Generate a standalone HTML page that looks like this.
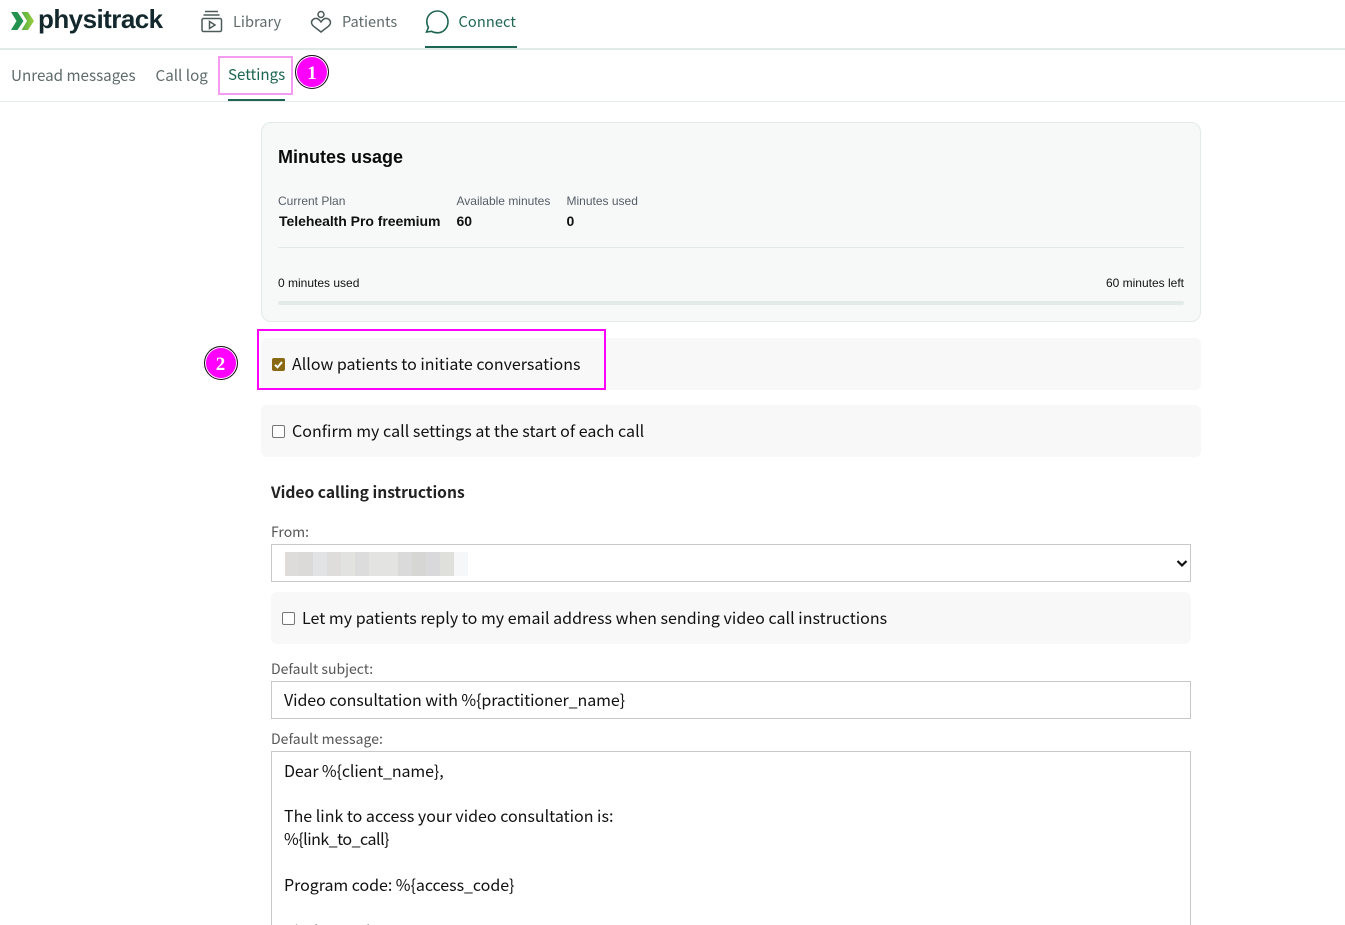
<!DOCTYPE html>
<html style="overflow:hidden;height:925px"><head><meta charset="utf-8"><title>Physitrack Connect Settings</title>
<style>
html,body{margin:0;padding:0;background:#fff}
body{width:1345px;height:925px;overflow:hidden;font-family:"Noto Sans CJK JP","Liberation Sans",sans-serif;color:#111}
#w{position:relative;width:1345px;height:925px;overflow:hidden}
.a{position:absolute;white-space:nowrap}
.t{position:absolute;white-space:nowrap;line-height:24px;font-size:16px}
.ar{font-family:"Liberation Sans",Arial,sans-serif}
.nav{color:#5f6a6a;font-size:14.6px}
.sub{color:#5f6a6a;font-size:15.2px}
.panel{position:absolute;background:#f8f8f8;border-radius:6px;left:261px;width:940px;height:52px}
.cb{position:absolute;width:11px;height:11px;border:1px solid #767676;border-radius:2px;background:#fff}
.pink{position:absolute;border:2px solid #f0f;box-sizing:border-box}
.num{position:absolute;width:32px;height:32px;border-radius:50%;background:#f0f;border:1px solid #111;box-shadow:inset 0 0 0 1px #fff;color:#fff;font:bold 19px/35px "Liberation Serif",serif;text-align:center}
.input{position:absolute;left:271px;width:918px;border:1px solid #c8c8c8;background:#fff}
.lbl{color:#555;font-size:14px}
</style></head><body><div id="w">

<svg class="a" style="left:10px;top:11px" width="25" height="20" viewBox="0 0 25 20"><defs><linearGradient id="g" x1="0" x2="1" y1="0" y2="0"><stop offset="0" stop-color="#55ad45"/><stop offset="1" stop-color="#9ad03f"/></linearGradient></defs><path d="M1 1h6.500l6 9-6 9H1l5.500-9z" fill="#23924e"/><path d="M11.500 1H18l6 9-6 9h-6.500l5.500-9z" fill="url(#g)"/></svg>
<div class="a ar" style="left:38px;top:3px;font-size:26px;line-height:32px;font-weight:bold;color:#13282c;letter-spacing:-.55px">physitrack</div>

<svg class="a" style="left:200px;top:10px" width="24" height="24" viewBox="0 0 24 24" fill="none" stroke="#4d5a5a" stroke-width="1.500"><path d="M5 1.500h13M3.500 5h16"/><rect x="2" y="8.500" width="19.500" height="13" rx="1.500"/><path d="M9.500 11.500v7l5.500-3.500z"/></svg>
<div class="t nav" style="left:233px;top:10px">Library</div>
<svg class="a" style="left:310px;top:10px" width="22" height="24" viewBox="0 0 22 24" fill="none" stroke="#4d5a5a" stroke-width="1.500"><circle cx="11" cy="4.500" r="3"/><path d="M7 8.500C4 8 1.500 10 1.500 12.500c0 1.500.8 2.500 2 3.700L11 22l7.500-5.800c1.200-1.200 2-2.200 2-3.700 0-2.500-2.500-4.500-5.500-4C13.500 9 12 10.500 11 12 10 10.500 8.500 9 7 8.500z"/></svg>
<div class="t nav" style="left:342px;top:10px">Patients</div>
<svg class="a" style="left:425px;top:10px" width="24" height="24" viewBox="0 0 24 24" fill="none" stroke="#1d6552" stroke-width="1.600"><path d="M12.500 1C6.500 1 1.800 5.600 1.800 11.500c0 2.300.6 4.300 1.600 6L1.500 22l5-.7c1.800 1 3.800 1.500 6 1.500 6 0 10.500-5 10.500-11S18.500 1 12.500 1z"/></svg>
<div class="t nav" style="left:458.500px;top:10px;color:#1d6552;letter-spacing:.1px">Connect</div>
<div class="a" style="left:425px;top:46px;width:92px;height:2px;background:#1d6552;z-index:2"></div>
<div class="a" style="left:0;top:48px;width:1345px;height:2px;background:#e2ebe8"></div>

<div class="t sub" style="left:11px;top:63px">Unread messages</div>
<div class="t sub" style="left:155.500px;top:63px">Call log</div>
<div class="t sub" style="left:228px;top:62px;color:#1d6552;font-size:15.1px">Settings</div>
<div class="a" style="left:228px;top:99px;width:57px;height:2px;background:#1d6552;z-index:2"></div>
<div class="a" style="left:0;top:101px;width:1345px;height:1px;background:#e6ecea"></div>
<div class="pink" style="left:218px;top:56px;width:75px;height:39px;border-color:#f59bf0"></div>
<div class="num" style="left:295px;top:55px">1</div>

<div class="a" style="left:261px;top:122px;width:938px;height:198px;background:#f7f9f9;border:1px solid #e2ebe8;border-radius:10px"></div>
<div class="a ar" style="left:278px;top:145px;font-size:18px;line-height:24px;font-weight:bold;color:#0b0b0b">Minutes usage</div>
<div class="a ar" style="left:278px;top:193px;font-size:12px;line-height:16px;color:#555d66">Current Plan</div>
<div class="a ar" style="left:456.500px;top:193px;font-size:12px;line-height:16px;color:#555d66">Available minutes</div>
<div class="a ar" style="left:566.500px;top:193px;font-size:12px;line-height:16px;color:#555d66">Minutes used</div>
<div class="a ar" style="left:279px;top:213px;font-size:14px;line-height:16px;font-weight:bold;letter-spacing:-.04px">Telehealth Pro freemium</div>
<div class="a ar" style="left:456.500px;top:213px;font-size:14px;line-height:16px;font-weight:bold">60</div>
<div class="a ar" style="left:566.500px;top:213px;font-size:14px;line-height:16px;font-weight:bold">0</div>
<div class="a" style="left:278px;top:247px;width:906px;height:1px;background:#e2ebe8"></div>
<div class="a ar" style="left:278px;top:275px;font-size:12px;line-height:16px">0 minutes used</div>
<div class="a ar" style="right:161px;top:275px;font-size:12px;line-height:16px">60 minutes left</div>
<div class="a" style="left:278px;top:301px;width:906px;height:4px;border-radius:2px;background:#e2ebe8"></div>

<div class="panel" style="top:338px"></div>
<div class="pink" style="left:257px;top:329px;width:349px;height:61px"></div>
<div class="num" style="left:203.500px;top:345.500px">2</div>
<div class="cb" style="left:272px;top:358px;background:#8a6914;border-color:#8a6914"></div>
<svg class="a" style="left:272px;top:358px" width="13" height="13" viewBox="0 0 13 13"><path d="M3 6.800l2.500 2.500L10 4" fill="none" stroke="#fff" stroke-width="2"/></svg>
<div class="t" style="left:292px;top:351px">Allow patients to initiate conversations</div>

<div class="panel" style="top:405px"></div>
<div class="cb" style="left:272px;top:425px"></div>
<div class="t" style="left:292px;top:418px;letter-spacing:.04px">Confirm my call settings at the start of each call</div>

<div class="t" style="left:271px;top:480px;font-weight:bold;font-size:15.600px;color:#222">Video calling instructions</div>

<div class="t lbl" style="left:271px;top:520px">From:</div>
<div class="input" style="top:544px;height:36px"></div>
<div class="a" style="left:285px;top:552px;width:183px;height:24px;background:linear-gradient(90deg,#dddcda 0 14px,#dbdad8 14px 28px,#e2e3e5 28px 42px,#dedddb 42px 56px,#e2e2e1 56px 70px,#dcdcdc 70px 84px,#e3e3e2 84px 113px,#dadada 113px 127px,#d6d6d4 127px 141px,#d9d9db 141px 155px,#dfdfdc 155px 169px,#f6f7f9 169px 183px)"></div>
<svg class="a" style="left:1176px;top:559px" width="12" height="9" viewBox="0 0 12 9"><path d="M1.500 2L6 6.500 10.500 2" fill="none" stroke="#111" stroke-width="2.200"/></svg>

<div class="panel" style="top:592px;left:271px;width:920px"></div>
<div class="cb" style="left:282px;top:612px"></div>
<div class="t" style="left:302px;top:605px;letter-spacing:.026px">Let my patients reply to my email address when sending video call instructions</div>

<div class="t lbl" style="left:271px;top:657px">Default subject:</div>
<div class="input" style="top:681px;height:36px"></div>
<div class="t" style="left:284px;top:687px;letter-spacing:-.07px">Video consultation with %{practitioner_name}</div>

<div class="t lbl" style="left:271px;top:727px;letter-spacing:.03px">Default message:</div>
<div class="input" style="top:751px;height:200px"></div>
<div class="t" style="left:284px;top:758px;letter-spacing:-.1px">Dear %{client_name},</div>
<div class="t" style="left:284px;top:803px">The link to access your video consultation is:</div>
<div class="t" style="left:284px;top:826px;letter-spacing:-.5px">%{link_to_call}</div>
<div class="t" style="left:284px;top:872px;letter-spacing:-.04px">Program code: %{access_code}</div>
<div class="t" style="left:284px;top:918px">Kind regards,</div>

</div></body></html>
